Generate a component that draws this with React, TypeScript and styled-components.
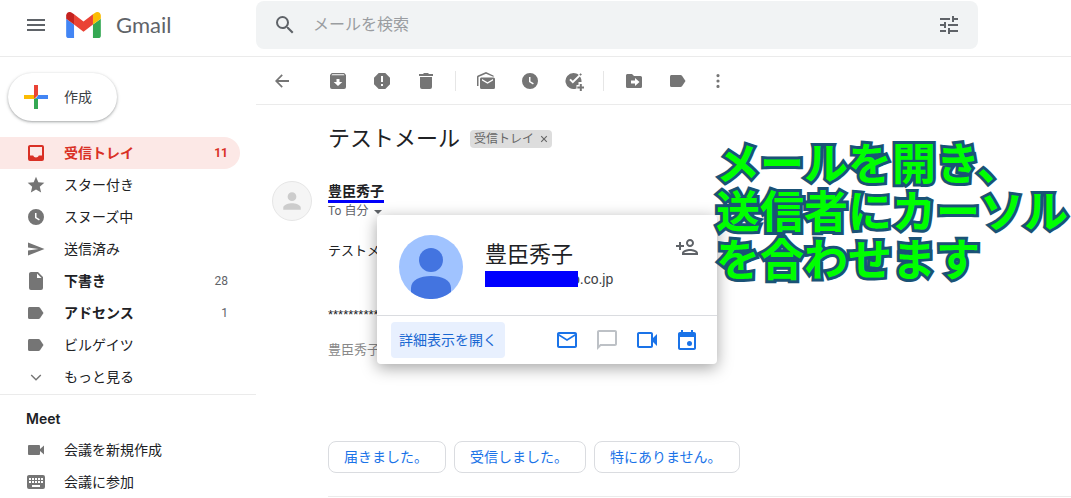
import React from "react";
import styled, { createGlobalStyle, css } from "styled-components";

const sans = `Roboto, "Noto Sans CJK JP", sans-serif`;

const GlobalStyle = createGlobalStyle`
  *, *::before, *::after { box-sizing: border-box; }
  body { margin: 0; background: #fff; color: #202124; font-family: ${sans}; font-size: 14px; line-height: 20px; }
  h1, h2, p, ul { margin: 0; padding: 0; font-weight: 400; }
  ul { list-style: none; }
  button, input { font-family: inherit; line-height: inherit; }
  svg { display: block; flex: none; }
`;

/* ---------- icons ---------- */

type IconProps = { d: string; size?: number; box?: string; color?: string };
const Icon = ({ d, size = 20, box = "0 0 24 24", color = "currentColor" }: IconProps) => (
  <svg width={size} height={size} viewBox={box} fill={color} fillRule="evenodd" aria-hidden="true">
    <path d={d} />
  </svg>
);

const g20 = "0 0 20 20";
const paths = {
  menu: "M3 18h18v-2H3v2zm0-5h18v-2H3v2zm0-7v2h18V6H3z",
  search:
    "M15.5 14h-.79l-.28-.27A6.47 6.47 0 0 0 16 9.5 6.5 6.5 0 1 0 9.5 16c1.61 0 3.09-.59 4.23-1.57l.27.28v.79l5 4.99L20.49 19l-4.99-5zm-6 0C7.01 14 5 11.99 5 9.5S7.01 5 9.5 5 14 7.01 14 9.5 11.99 14 9.5 14z",
  tune: "M3 17v2h6v-2H3zM3 5v2h10V5H3zm10 16v-2h8v-2h-8v-2h-2v6h2zM7 9v2H3v2h4v2h2V9H7zm14 4v-2H11v2h10zm-6-4h2V7h4V5h-4V3h-2v6z",
  inbox:
    "M4 2h12a2 2 0 0 1 2 2v12a2 2 0 0 1-2 2H4a2 2 0 0 1-2-2V4c0-1.100.9-2 2-2zM4 4v8.500h3.200c.4 1.200 1.500 2 2.800 2s2.400-.8 2.800-2H16V4z",
  star: "M12 17.27 18.18 21l-1.64-7.03L22 9.24l-7.19-.61L12 2 9.19 8.63 2 9.24l5.460 4.730L5.820 21z",
  clock: "M10 2a8 8 0 1 0 0 16 8 8 0 0 0 0-16zM9 6h1.500v4.200l3.300 2-.8 1.200L9 11z",
  send: "M2 3.400v5.100L12.500 10 2 11.500v5.100L18.500 10z",
  file: "M5 1h7l5 5v11a2 2 0 0 1-2 2H5a2 2 0 0 1-2-2V3c0-1.100.9-2 2-2zM11 2.500V7h4.500z",
  tag: "M3.500 4h9c.6 0 1.100.3 1.500.8L17.500 10 14 15.200c-.4.500-.9.800-1.500.8h-9A1.500 1.500 0 0 1 2 14.500v-9C2 4.700 2.700 4 3.500 4z",
  chevron: "M5.700 7.500 10 11.800l4.300-4.300 1 1L10 13.800 4.700 8.500z",
  video: "M3 5h10a1 1 0 0 1 1 1v3l4-3.500v9L14 11v3a1 1 0 0 1-1 1H3a1 1 0 0 1-1-1V6a1 1 0 0 1 1-1z",
  keyboard:
    "M3 3h14a2 2 0 0 1 2 2v10a2 2 0 0 1-2 2H3a2 2 0 0 1-2-2V5c0-1.100.9-2 2-2zM3 6v2h2V6zm3 0v2h2V6zm3 0v2h2V6zm3 0v2h2V6zm3 0v2h2V6zM3 9v2h2V9zm3 0v2h2V9zm3 0v2h2V9zm3 0v2h2V9zm3 0v2h2V9zM6 13v2h8v-2z",
  back: "M17 9H6.300l4.500-4.500L9.600 3.300 3 10l6.600 6.700 1.200-1.200L6.300 11H17z",
  archive:
    "M3.800 2h12.400L18 4v12a2 2 0 0 1-2 2H4a2 2 0 0 1-2-2V4zM4.200 3.300l-.7 1h13l-.7-1zM8.500 8v3H5.700l4.300 4 4.300-4h-2.800V8z",
  spam: "M6.700 2h6.600L18 6.700v6.600L13.300 18H6.700L2 13.300V6.700zM9 5v6h2V5zm0 8v2h2v-2z",
  trash: "M7.500 2h5v1H17v2H3V3h4.500zM4 6h12v10a2 2 0 0 1-2 2H6a2 2 0 0 1-2-2z",
  unread:
    "M10 1 1.900 4.600C1.300 4.900 1 5.300 1 6v9h1.500V6L10 2.700 16.500 5.500h1.700c-.2-.4-.5-.7-.9-.9zM5.500 6.500h12A1.500 1.500 0 0 1 19 8v8.500a1.500 1.500 0 0 1-1.500 1.500h-12A1.500 1.500 0 0 1 4 16.500V8c0-.8.7-1.500 1.500-1.500zM6 8v1.500l5.500 3.300L17 9.500V8l-5.500 3.300z",
  task: "M9.500 2c2 0 3.800.7 5.200 1.900L8.800 9.800 6.700 7.700 5.300 9.100l3.500 3.500 7.100-7.100c1 1.300 1.600 2.900 1.600 4.500v1h-3v3h-2v3.400A8 8 0 1 1 9.500 2zM16.600 2.200l1.300 1.200-1.400 1.400-1.200-1.200zM15.800 13h2v2.500h2.400v2h-2.400V20h-2v-2.500h-2.500v-2h2.500z",
  move: "M3.500 3H8l2 2h6.500A1.500 1.500 0 0 1 18 6.500v9a1.500 1.500 0 0 1-1.500 1.500h-13A1.500 1.500 0 0 1 2 15.500v-11C2 3.700 2.700 3 3.500 3zM11 7v2.500H7v3h4V15l4.500-4z",
  more: "M10 3a1.600 1.600 0 1 1 0 3.200A1.600 1.600 0 0 1 10 3zm0 5.400a1.600 1.600 0 1 1 0 3.200 1.600 1.600 0 0 1 0-3.200zm0 5.400a1.600 1.600 0 1 1 0 3.200 1.600 1.600 0 0 1 0-3.200z",
  mail: "M20 4H4c-1.100 0-2 .9-2 2v12c0 1.100.9 2 2 2h16c1.100 0 2-.9 2-2V6c0-1.100-.9-2-2-2zm0 14H4V8l8 5 8-5v10zM12 11 4 6h16z",
  chat: "M20 2H4c-1.100 0-2 .9-2 2v18l4-4h14c1.100 0 2-.9 2-2V4c0-1.100-.9-2-2-2zm0 14H5.170L4 17.170V4h16z",
  camera: "M4 4h12c1.100 0 2 .9 2 2v4l4-4v12l-4-4v4c0 1.100-.9 2-2 2H4c-1.100 0-2-.9-2-2V6c0-1.100.9-2 2-2zm0 2v12h12V6z",
  calendar:
    "M6 2h2v2h8V2h2v2h1c1.100 0 2 .9 2 2v14c0 1.100-.9 2-2 2H5c-1.100 0-2-.9-2-2V6c0-1.100.9-2 2-2h1zM5 9v11h14V9zM14.500 13a2.500 2.500 0 1 1 0 5 2.500 2.500 0 0 1 0-5z",
  personAdd:
    "M15 12c2.210 0 4-1.790 4-4s-1.790-4-4-4-4 1.790-4 4 1.790 4 4 4zm0-6c1.100 0 2 .9 2 2s-.9 2-2 2-2-.9-2-2 .9-2 2-2zm0 8c-2.670 0-8 1.340-8 4v2h16v-2c0-2.660-5.330-4-8-4zm-6 4c.220-.720 3.310-2 6-2 2.700 0 5.800 1.290 6 2H9zm-3-3v-3h3v-2H6V7H4v3H1v2h3v3z",
  person: "M12 12a4 4 0 1 0 0-8 4 4 0 0 0 0 8zm0 2c-2.670 0-8 1.340-8 4v2h16v-2c0-2.660-5.330-4-8-4z",
  caret: "M0 0h8L4 4z",
  close: "M1 0 4 3 7 0l1 1-3 3 3 3-1 1-3-3-3 3-1-1 3-3-3-3z",
};

const GmailLogo = () => (
  <svg width="35" height="26" viewBox="52 42 88 66" aria-hidden="true">
    <path fill="#4285f4" d="M58 108h14V74L52 59v43c0 3.320 2.690 6 6 6" />
    <path fill="#34a853" d="M120 108h14c3.320 0 6-2.690 6-6V59l-20 15" />
    <path fill="#fbbc04" d="M120 48v26l20-15v-8c0-7.420-8.470-11.650-14.400-7.200" />
    <path fill="#ea4335" d="M72 74V48l24 18 24-18v26L96 92" />
    <path fill="#c5221f" d="M52 51v8l20 15V48l-5.600-4.200c-5.940-4.450-14.400-.220-14.400 7.200" />
  </svg>
);

const PlusLogo = () => (
  <svg width="24" height="24" viewBox="0 0 24 24" aria-hidden="true">
    <path fill="#34a853" d="M10 14v10h4V12z" />
    <path fill="#4285f4" d="M14 10h10v4H12z" />
    <path fill="#fbbc04" d="M0 10v4h10l4-4z" />
    <path fill="#ea4335" d="M10 0v14l4-4V0z" />
  </svg>
);

const ContactAvatar = () => (
  <svg width="64" height="64" viewBox="0 0 64 64" aria-hidden="true">
    <circle cx="32" cy="32" r="32" fill="#a0c3ff" />
    <circle cx="32" cy="25" r="12" fill="#4374e0" />
    <path fill="#4374e0" d="M12 57V53C12 45 21 41 32 41s20 4 20 12v4a32 32 0 0 1-40 0z" />
  </svg>
);

/* ---------- header ---------- */

const plainButton = css`
  display: flex;
  align-items: center;
  justify-content: center;
  padding: 0;
  border: 0;
  background: none;
  color: inherit;
  cursor: pointer;
`;

const IconButton = styled.button<{ $tone?: string }>`
  ${plainButton}
  color: ${(p) => p.$tone ?? "#757575"};
`;

const Header = styled.header`
  display: flex;
  align-items: center;
  height: 57px;
  padding-bottom: 6px;
  border-bottom: 1px solid #ebebeb;
  color: #5f6368;
`;

const Brand = styled.div`
  display: flex;
  align-items: center;
  flex: 0 0 256px;
  padding-left: 24px;
  gap: 18px;
`;

const BrandLink = styled.a`
  display: flex;
  align-items: center;
  gap: 15px;
  color: #5f6368;
  font: 22px/28px Lato, ${sans};
  text-decoration: none;
`;

const SearchBar = styled.form`
  display: flex;
  align-items: center;
  flex: 1;
  gap: 16px;
  height: 48px;
  margin-right: 93px;
  padding: 0 17px;
  border-radius: 8px;
  background: #f1f3f4;
`;

const SearchInput = styled.input`
  flex: 1;
  min-width: 0;
  padding: 0;
  border: 0;
  outline: 0;
  background: none;
  font-size: 16px;
  line-height: 24px;
  &::placeholder { color: #9a9da1; opacity: 1; }
`;

/* ---------- sidebar ---------- */

const Columns = styled.div`
  display: flex;
`;

const Sidebar = styled.aside`
  flex: 0 0 256px;
`;

const ComposeButton = styled.button`
  ${plainButton}
  gap: 16px;
  height: 48px;
  margin: 16px 8px;
  padding: 0 25px 0 16px;
  border-radius: 24px;
  background: #fff;
  box-shadow: 0 1px 2px rgba(60, 64, 67, 0.3), 0 1px 3px 1px rgba(60, 64, 67, 0.15);
  color: #3c4043;
  font-size: 14px;
`;

const NavList = styled.ul`
  padding-right: 16px;
`;

const NavLink = styled.a<{ $active?: boolean; $bold?: boolean }>`
  display: flex;
  align-items: center;
  height: 32px;
  padding: 0 12px 0 26px;
  gap: 18px;
  border-radius: 0 16px 16px 0;
  background: ${(p) => (p.$active ? "#fce8e6" : "transparent")};
  color: ${(p) => (p.$active ? "#d93025" : "#202124")};
  font-weight: ${(p) => (p.$active || p.$bold ? 700 : 400)};
  text-decoration: none;
  svg { color: ${(p) => (p.$active ? "#d93025" : "#757575")}; }
`;

const NavLabel = styled.span`
  flex: 1;
`;

const NavCount = styled.span<{ $active?: boolean }>`
  color: ${(p) => (p.$active ? "#d93025" : "#5f6368")};
  font-size: 12px;
  font-weight: ${(p) => (p.$active ? 700 : 400)};
`;

const MeetSection = styled.section`
  margin-top: 1px;
  padding-top: 14px;
  border-top: 1px solid #ebebeb;
`;

const MeetTitle = styled.h2`
  padding: 0 26px 5px;
  font: 600 14px/20px Inter, ${sans};
`;

/* ---------- message ---------- */

const Main = styled.main`
  position: relative;
  flex: 1;
  min-width: 0;
`;

const Toolbar = styled.div`
  display: flex;
  align-items: center;
  gap: 20px;
  height: 48px;
  padding-left: 16px;
  border-bottom: 1px solid #ebebeb;
`;

const ToolGroup = styled.div<{ $first?: boolean }>`
  display: flex;
  gap: 24px;
  margin-left: ${(p) => (p.$first ? 16 : 0)}px;
`;

const Divider = styled.span`
  width: 1px;
  height: 20px;
  margin-left: -1px;
  background: #e6e6e6;
`;

const SubjectRow = styled.div`
  display: flex;
  align-items: center;
  gap: 10px;
  padding: 20px 0 28px 72px;
`;

const Subject = styled.h1`
  font-size: 22px;
  line-height: 28px;
`;

const Chip = styled.span`
  display: flex;
  align-items: center;
  gap: 6px;
  padding: 0 4px;
  border-radius: 4px;
  background: #ddd;
  color: #666;
  font-size: 12px;
  line-height: 18px;
`;

const Message = styled.article`
  display: flex;
  gap: 16px;
  padding-left: 16px;
`;

const Avatar = styled.div`
  display: flex;
  align-items: center;
  justify-content: center;
  flex: none;
  width: 40px;
  height: 40px;
  border: 1px solid #e6e6e6;
  border-radius: 50%;
  background: #f5f5f5;
`;

const MessageBody = styled.div`
  position: relative;
  flex: 1;
  min-width: 0;
  padding-top: 1px;
`;

const Sender = styled.h2`
  width: fit-content;
  border-bottom: 3px solid #0000fa;
  font-size: 14px;
  font-weight: 700;
  line-height: 18px;
`;

const Recipient = styled.button`
  ${plainButton}
  gap: 6px;
  color: #5f6368;
  font-size: 12px;
  line-height: 16px;
`;

const MailText = styled.div`
  padding: 22px 0 81px;
  font-family: "Liberation Sans", "Noto Sans CJK JP", sans-serif;
  font-size: 13px;
  line-height: 20px;
`;

const Separator = styled.p`
  margin: 44px 0 15px;
`;

const Signature = styled.p`
  color: #888;
`;

const Replies = styled.div`
  display: flex;
  gap: 8px;
  padding-bottom: 23px;
  border-bottom: 1px solid #ebebeb;
`;

const ReplyButton = styled.button`
  height: 32px;
  padding: 0 17px 0 15px;
  border: 1px solid #dadce0;
  border-radius: 8px;
  background: #fff;
  color: #1a73e8;
  font-size: 14px;
  line-height: 20px;
  white-space: nowrap;
`;

/* ---------- contact card ---------- */

const Card = styled.section`
  position: absolute;
  top: 34px;
  left: 49px;
  width: 340px;
  border-radius: 4px;
  background: #fff;
  box-shadow: 0 4px 16px rgba(0, 0, 0, 0.36);
`;

const CardTop = styled.div`
  display: flex;
  align-items: flex-start;
  gap: 22px;
  padding: 20px 18px 16px 22px;
  border-bottom: 1px solid #dadce0;
`;

const CardInfo = styled.div`
  flex: 1;
  padding-top: 4px;
`;

const CardName = styled.h2`
  font-size: 22px;
  line-height: 32px;
`;

const Address = styled.p`
  display: flex;
  color: #3c4043;
  font: 14px/16px "Liberation Sans", sans-serif;
`;

const Redaction = styled.span`
  z-index: 1;
  width: 93px;
  height: 16px;
  margin-right: -6px;
  background: #00f;
`;

const CardActions = styled.div`
  display: flex;
  align-items: center;
  gap: 16px;
  padding: 6px 18px 6px 14px;
`;

const DetailsButton = styled.button`
  height: 36px;
  margin-right: auto;
  padding: 0 8px;
  border: 0;
  border-radius: 4px;
  background: #e8f0fe;
  color: #1967d2;
  font-size: 14px;
`;

const Callout = styled.p`
  position: absolute;
  top: 84px;
  left: 460px;
  color: #0f0;
  font: 700 44px/48px "Liberation Sans", "Noto Sans CJK JP", sans-serif;
  white-space: nowrap;
  paint-order: stroke fill;
  -webkit-text-stroke: 6px #1a5276;
  stroke-linejoin: round;
`;

/* ---------- data ---------- */

type NavItem = { label: string; icon: string; box?: string; count?: number; active?: boolean; bold?: boolean };

const folders: NavItem[] = [
  { label: "受信トレイ", icon: paths.inbox, box: g20, count: 11, active: true },
  { label: "スター付き", icon: paths.star, box: "0 0 24 24" },
  { label: "スヌーズ中", icon: paths.clock, box: g20 },
  { label: "送信済み", icon: paths.send, box: g20 },
  { label: "下書き", icon: paths.file, box: g20, count: 28, bold: true },
  { label: "アドセンス", icon: paths.tag, box: g20, count: 1, bold: true },
  { label: "ビルゲイツ", icon: paths.tag, box: g20 },
  { label: "もっと見る", icon: paths.chevron, box: g20 },
];

const meetings: NavItem[] = [
  { label: "会議を新規作成", icon: paths.video, box: g20 },
  { label: "会議に参加", icon: paths.keyboard, box: g20 },
];

const toolGroups = [
  [["アーカイブ", paths.archive], ["迷惑メールを報告", paths.spam], ["削除", paths.trash]],
  [["未読にする", paths.unread], ["スヌーズ", paths.clock], ["ToDo リストに追加", paths.task]],
  [["移動", paths.move], ["ラベル", paths.tag]],
];

const Nav = ({ items }: { items: NavItem[] }) => (
  <NavList>
    {items.map((item) => (
      <li key={item.label}>
        <NavLink href="#" $active={item.active} $bold={item.bold}>
          <Icon d={item.icon} box={item.box} />
          <NavLabel>{item.label}</NavLabel>
          {item.count && <NavCount $active={item.active}>{item.count}</NavCount>}
        </NavLink>
      </li>
    ))}
  </NavList>
);

const ContactCard = () => (
  <Card aria-label="連絡先">
    <CardTop>
      <ContactAvatar />
      <CardInfo>
        <CardName>豊臣秀子</CardName>
        <Address>
          <Redaction />
          o.co.jp
        </Address>
      </CardInfo>
      <IconButton aria-label="連絡先に追加" $tone="#5f6368">
        <Icon d={paths.personAdd} size={24} />
      </IconButton>
    </CardTop>
    <CardActions>
      <DetailsButton>詳細表示を開く</DetailsButton>
      <IconButton aria-label="メールを送信" $tone="#1a73e8"><Icon d={paths.mail} size={24} /></IconButton>
      <IconButton aria-label="チャット" $tone="#bdc1c6"><Icon d={paths.chat} size={24} /></IconButton>
      <IconButton aria-label="ビデオ通話" $tone="#1a73e8"><Icon d={paths.camera} size={24} /></IconButton>
      <IconButton aria-label="予定を作成" $tone="#1a73e8"><Icon d={paths.calendar} size={24} /></IconButton>
    </CardActions>
  </Card>
);

export default function App() {
  return (
    <>
      <GlobalStyle />
      <Header>
        <Brand>
          <IconButton aria-label="メインメニュー" $tone="#5f6368"><Icon d={paths.menu} size={24} /></IconButton>
          <BrandLink href="#"><GmailLogo />Gmail</BrandLink>
        </Brand>
        <SearchBar role="search">
          <IconButton type="button" aria-label="検索" $tone="#5f6368"><Icon d={paths.search} size={24} /></IconButton>
          <SearchInput aria-label="メールを検索" placeholder="メールを検索" />
          <IconButton type="button" aria-label="検索オプション" $tone="#5f6368"><Icon d={paths.tune} size={24} /></IconButton>
        </SearchBar>
      </Header>
      <Columns>
        <Sidebar>
          <ComposeButton><PlusLogo />作成</ComposeButton>
          <Nav items={folders} />
          <MeetSection>
            <MeetTitle>Meet</MeetTitle>
            <Nav items={meetings} />
          </MeetSection>
        </Sidebar>
        <Main>
          <Toolbar>
            <IconButton aria-label="戻る"><Icon d={paths.back} box={g20} /></IconButton>
            {toolGroups.map((group, i) => (
              <React.Fragment key={i}>
                {i > 0 && <Divider />}
                <ToolGroup $first={i === 0}>
                  {group.map(([label, d]) => (
                    <IconButton key={label} aria-label={label}><Icon d={d} box={g20} /></IconButton>
                  ))}
                </ToolGroup>
              </React.Fragment>
            ))}
            <IconButton aria-label="その他"><Icon d={paths.more} box={g20} /></IconButton>
          </Toolbar>
          <SubjectRow>
            <Subject>テストメール</Subject>
            <Chip>
              受信トレイ
              <IconButton aria-label="ラベルを削除" $tone="#666"><Icon d={paths.close} size={8} box="-1 -1 10 10" /></IconButton>
            </Chip>
          </SubjectRow>
          <Message>
            <Avatar><Icon d={paths.person} size={24} box="1 1 22 22" color="#ccc" /></Avatar>
            <MessageBody>
              <Sender>豊臣秀子</Sender>
              <Recipient>To 自分<Icon d={paths.caret} size={8} box="0 -3 8 8" /></Recipient>
              <MailText>
                <p>テストメール</p>
                <Separator>********************</Separator>
                <Signature>豊臣秀子</Signature>
              </MailText>
              <Replies>
                <ReplyButton>届きました。</ReplyButton>
                <ReplyButton>受信しました。</ReplyButton>
                <ReplyButton>特にありません。</ReplyButton>
              </Replies>
              <ContactCard />
            </MessageBody>
          </Message>
          <Callout>
            メールを開き、<br />送信者にカーソル<br />を合わせます
          </Callout>
        </Main>
      </Columns>
    </>
  );
}
